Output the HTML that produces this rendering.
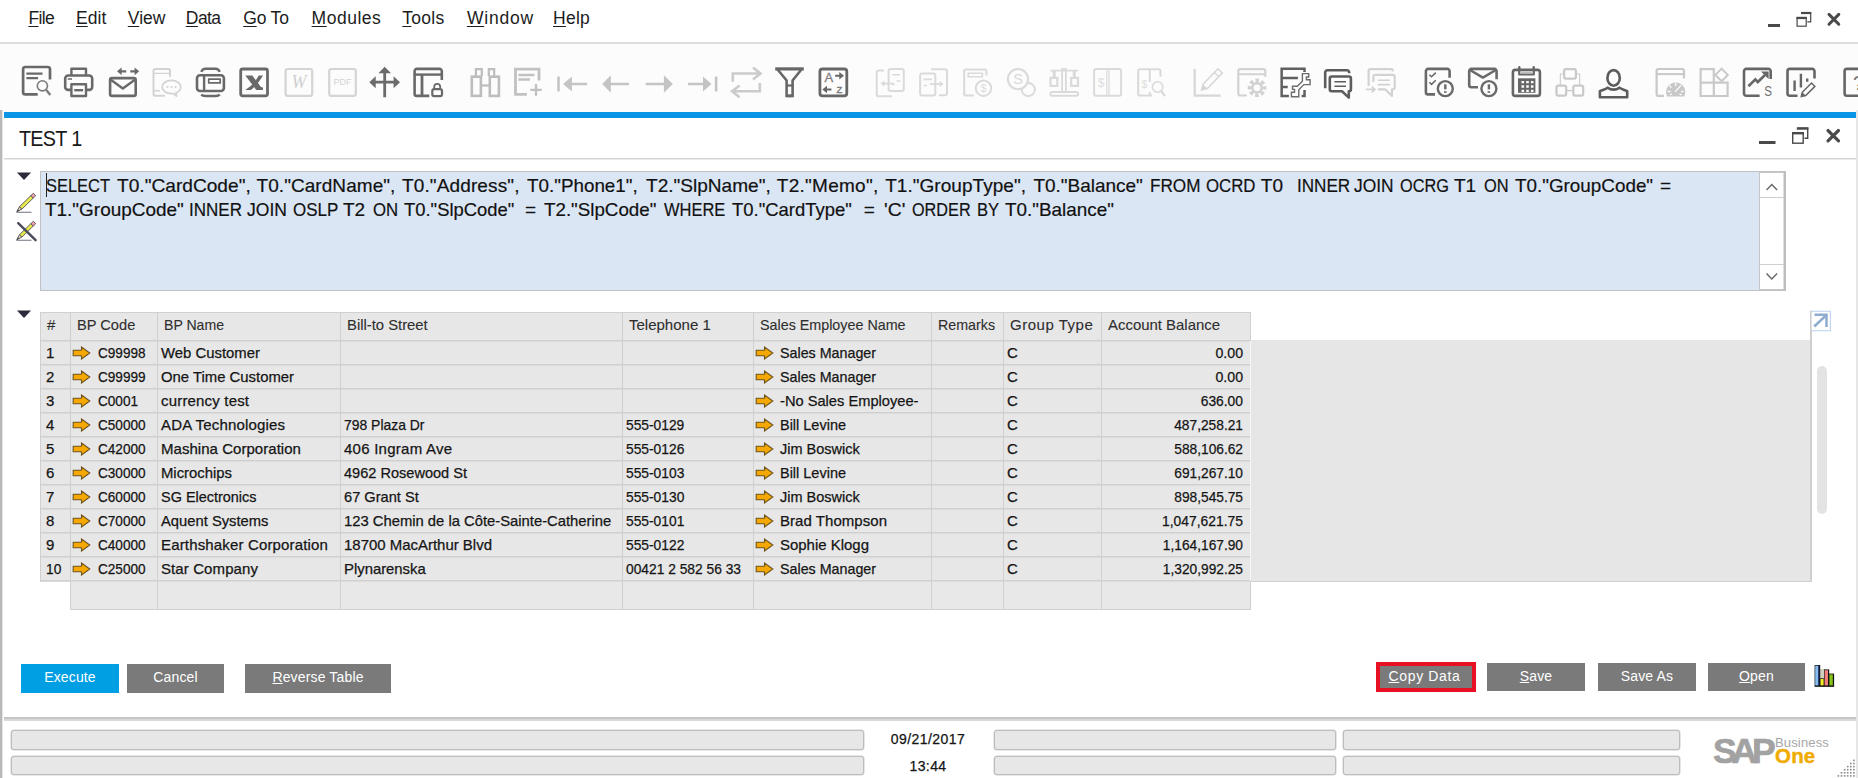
<!DOCTYPE html>
<html lang="en">
<head>
<meta charset="utf-8">
<title>TEST 1</title>
<style>
html,body{margin:0;padding:0;}
body{width:1858px;height:778px;position:relative;overflow:hidden;background:#fff;font-family:"Liberation Sans",sans-serif;color:#1a1a1a;}
.abs{position:absolute;}
/* menu */
#menubar{left:0;top:0;width:1858px;height:43px;background:#fff;}
#menuline{left:0;top:42px;width:1858px;height:2px;background:#dcdcdc;}
.mi{position:absolute;top:7px;font-size:17.5px;line-height:22px;color:#1c1c1c;white-space:nowrap;}
.mi u{text-decoration:underline;text-underline-offset:2px;text-decoration-thickness:1px;}
/* toolbar */
#toolbar{left:0;top:44px;width:1858px;height:68px;background:#fcfcfc;}
.ic{position:absolute;top:66px;width:30px;height:30px;}
#bluebar{left:4px;top:112px;width:1852px;height:6px;background:#0a94e6;}
#lborder{left:0;top:110px;width:2px;height:668px;background:#b9b9b9;border-right:1px solid #e3e3e3;}
#rborder{left:1856px;top:110px;width:2px;height:668px;background:#e6e6e6;}
#title{left:19px;top:127px;font-size:22px;line-height:24px;color:#1a1a1a;white-space:nowrap;transform:scaleX(0.9);transform-origin:0 0;letter-spacing:-0.8px;}
#titleline{left:4px;top:158px;width:1852px;height:2px;background:linear-gradient(#d5d5d5 50%,#ebebeb 50%);}
/* query box */
#qbox{left:40px;top:171px;width:1744px;height:118px;border:1px solid #c1c1c1;background:#dbe6f4;}
#qtext{left:46px;top:173px;font-size:19px;line-height:24px;color:#111;white-space:pre;-webkit-text-stroke:0.2px #111;}
#qscroll{left:1760px;top:173px;width:24px;height:116px;background:#fff;border-left:1px solid #c4c4c4;}
.qw{position:absolute;white-space:pre;transform-origin:0 0;}
/* grid */
#grid{left:40px;top:312px;}
.cell{position:absolute;font-size:15px;line-height:16px;transform-origin:0 0;color:#151515;white-space:nowrap;-webkit-text-stroke:0.25px #151515;}
.cell.hd{color:#2e2e2e;-webkit-text-stroke:0.1px #2e2e2e;}
.gl{position:absolute;background:#d0d0d0;}
.arw{position:absolute;width:19px;height:14px;}
.gl2{position:absolute;background:#dcdcdc;}
.arw path{fill:#f6a800;stroke:#6e5420;stroke-width:1.1;stroke-linejoin:miter;}
/* buttons */
.btn{position:absolute;top:663px;height:28px;background:#7a7a7a;color:#fff;font-size:14px;line-height:26px;text-align:center;white-space:nowrap;letter-spacing:0.15px;}
.btn u{text-underline-offset:1px;}
/* status */
#statline{left:4px;top:717px;width:1852px;height:4px;background:linear-gradient(#c3c3c3,#c8c8c8 50%,#d6d6d6 50%,#dadada);}
.sf{position:absolute;height:17px;background:#e7e7e7;border:1px solid #bdbdbd;border-radius:3px;box-shadow:0 0 0 0.5px #d0d0d0;}
.st{position:absolute;font-size:14px;line-height:16px;color:#151515;text-align:center;width:100px;letter-spacing:0.42px;-webkit-text-stroke:0.25px #151515;}
</style>
</head>
<body>
<div id="menubar" class="abs"></div>
<div id="menuline" class="abs"></div>
<div class="mi" style="left:28.4px;letter-spacing:-0.60px"><u>F</u>ile</div>
<div class="mi" style="left:76.0px;letter-spacing:0.03px"><u>E</u>dit</div>
<div class="mi" style="left:127.8px;letter-spacing:0.03px"><u>V</u>iew</div>
<div class="mi" style="left:185.8px;letter-spacing:-0.57px"><u>D</u>ata</div>
<div class="mi" style="left:243.2px;letter-spacing:-0.17px"><u>G</u>o To</div>
<div class="mi" style="left:311.6px;letter-spacing:0.51px"><u>M</u>odules</div>
<div class="mi" style="left:402.3px;letter-spacing:0.28px"><u>T</u>ools</div>
<div class="mi" style="left:466.9px;letter-spacing:0.81px"><u>W</u>indow</div>
<div class="mi" style="left:553px;letter-spacing:0.26px"><u>H</u>elp</div>

<div id="toolbar" class="abs"></div>
<!--ICONS-->
<svg class="abs" style="left:0;top:44px" width="1858" height="68" viewBox="0 44 1858 68" fill="none" stroke-linejoin="round">
<!-- 1 print preview -->
<g stroke="#696969">
<path d="M50 79.5V69.2a2.2 2.2 0 0 0-2.2-2.2H25.3a2.2 2.2 0 0 0-2.2 2.2v23a2.2 2.2 0 0 0 2.2 2.2H37.7" stroke-width="2.7"/>
<path d="M26.4 73.7H42.5M26.4 78.1H38" stroke-width="2.2"/>
<circle cx="42.4" cy="85.8" r="5.1" stroke-width="1.6" stroke="#7c7c7c"/>
<path d="M46.3 90L50.3 95" stroke-width="2.4" stroke="#7c7c7c"/>
</g>
<!-- 2 printer -->
<g stroke="#696969">
<path d="M71.4 75V68.8H86V75" stroke-width="2.4"/>
<rect x="65.2" y="75.5" width="27" height="14.4" rx="3" stroke-width="2.6"/>
<rect x="71.4" y="84.2" width="14.6" height="11.8" fill="#fcfcfc" stroke-width="2.4"/>
<path d="M67.8 79H72" stroke-width="1.5"/>
<path d="M74.2 90.2H83.1" stroke-width="2.4"/>
</g>
<!-- 3 envelope with arrows -->
<g stroke="#696969">
<rect x="110.1" y="78.1" width="25.6" height="17.8" rx="2" stroke-width="2.6"/>
<path d="M110.8 79.8L122.8 88.4L134.9 79.8" stroke-width="2.4"/>
<path d="M120 71.300H126.200M130.300 71.300H136.500" stroke-width="2.200"/>
<path d="M117 71.300L121.600 67.400V75.200ZM139.200 71.300L134.600 67.400V75.200Z" fill="#696969" stroke="none"/>
</g>
<!-- 4 phone chat (disabled) -->
<g stroke="#d3d3d3">
<path d="M170 76.8V70.8a1.8 1.8 0 0 0-1.8-1.8H155.3a1.8 1.8 0 0 0-1.8 1.8V93.9a1.8 1.8 0 0 0 1.8 1.8H164.7" stroke-width="2"/>
<path d="M153.5 73.4H170M153.5 90.7H160" stroke-width="1.4"/>
<path d="M171.5 80.4c5.2 0 9.3 2.9 9.3 6.6c0 2.6-2 4.8-4.9 5.9l0.6 3.3l-3.4-2.7c-0.5 0.1-1 0.1-1.6 0.1c-5.2 0-9.3-2.9-9.3-6.6s4.100-6.600 9.300-6.600Z" stroke-width="1.7" fill="#fcfcfc"/>
<path d="M167.500 87h0.010M171.500 87h0.010M175.500 87h0.010" stroke-width="2.2" stroke-linecap="round"/>
</g>
<!-- 5 fax/layout -->
<g stroke="#696969">
<rect x="197" y="75.3" width="26.9" height="15.7" rx="3" stroke-width="2.6"/>
<path d="M201.3 71.800c0.700-1.900 2-3 4.200-3H215.500c2.200 0 3.500 1.100 4.200 3" stroke-width="2.400"/>
<path d="M201.300 94.500c0.700 1 2 1.500 4.200 1.500H215.500c2.200 0 3.500-0.500 4.200-1.500" stroke-width="2.400"/>
<path d="M204.100 75.300V91" stroke-width="2.400"/>
<rect x="208.700" y="79.100" width="11.500" height="3.800" stroke-width="1.700"/>
</g>
<!-- 6 excel -->
<g stroke="#696969">
<rect x="240.700" y="69" width="26.800" height="26.800" rx="2" stroke-width="2.800"/>
<path d="M245.300 75.600H252.300L263.200 89.900H256.300Z" fill="#696969" stroke="none"/>
<path d="M263 75.600H258.800C256.500 80 251.500 86.500 245.200 89.900H250.800C253.300 88.500 259.500 82 263 75.600Z" fill="#696969" stroke="none"/>
<path d="M257 86.300L263 87.600V89.900H258.500Z" fill="#696969" stroke="none"/>
</g>
<!-- 7 word (disabled) -->
<g stroke="#d4d4d4">
<rect x="285.600" y="69" width="26.600" height="26.800" rx="2" stroke-width="2.200"/>
<text x="298.900" y="88.300" font-family="Liberation Serif,serif" font-style="italic" font-size="18" text-anchor="middle" fill="#cfcfcf" stroke="none">W</text>
</g>
<!-- 8 pdf (disabled) -->
<g stroke="#d4d4d4">
<rect x="329.200" y="69" width="26.600" height="26.800" rx="2" stroke-width="2.200"/>
<text x="342.500" y="85.300" font-family="Liberation Sans,sans-serif" font-size="9" text-anchor="middle" fill="#d2d2d2" stroke="none">PDF</text>
</g>
<!-- 9 move -->
<g stroke="#6b6b6b">
<path d="M384.700 71V97.200M373 82.200H396.500" stroke-width="2.800"/>
<path d="M384.700 66.800L391 73.300H378.400ZM369.300 82.200L375.700 76.200V88.300ZM400 82.200L393.600 76.200V88.300Z" fill="#6b6b6b" stroke="none"/>
</g>
<!-- 10 layout lock -->
<g stroke="#696969">
<path d="M441.800 80V71.100a2.200 2.200 0 0 0-2.200-2.200H416.800a2.200 2.200 0 0 0-2.200 2.200v22.600a2.200 2.200 0 0 0 2.200 2.200H429.300" stroke-width="2.600"/>
<path d="M414.600 74.600H441.800" stroke-width="2.400"/>
<path d="M422 75V95.900" stroke-width="2.800"/>
<rect x="432.300" y="89.100" width="9.700" height="7" rx="1.800" stroke-width="2.200" fill="#fcfcfc"/>
<path d="M434.200 88.500V86.800a3 3 0 0 1 6 0V88.500" stroke-width="1.800"/>
</g>
<!-- 11 binoculars (disabled) -->
<g stroke="#bdbdbd" stroke-linejoin="miter">
<rect x="471.800" y="76.700" width="9.100" height="19.200" stroke-width="2.600"/>
<rect x="489.800" y="76.700" width="9.100" height="19.200" stroke-width="2.600"/>
<path d="M475.900 76V69.200H481.800V76M488.800 76V69.200H494.200V76" stroke-width="2.200"/>
<path d="M481 85.500H489.700" stroke-width="2.200"/>
</g>
<!-- 12 add record (disabled) -->
<g stroke="#c1c1c1" stroke-linejoin="miter">
<path d="M539 80.600V69.050H515.500V94.300H526.900" stroke-width="2.800"/>
<path d="M518.400 75H534.400M518.400 79.500H529.900" stroke-width="2.300"/>
<path d="M536 84.100V95.700M530.200 89.900H541.800" stroke-width="2.400"/>
</g>
<!-- 13-16 nav arrows (disabled) -->
<g stroke="#c4c4c4" fill="#c4c4c4">
<path d="M558.500 76.500V91.400" stroke-width="2.600"/>
<path d="M571 84H587.200M610 84H629M645.700 84H664.500M688 84H704" stroke-width="2.400"/>
<path d="M563.100 84L571.900 76.500V91.400ZM602.200 84L610.800 75.200V92.800ZM672.800 84L663.900 75.200V92.800ZM711.500 84L703 76.500V91.400Z" stroke="none"/>
<path d="M716.100 76.500V91.400" stroke-width="2.600"/>
</g>
<!-- 17 refresh (disabled) -->
<g stroke="#cbcbcb" stroke-linejoin="miter">
<path d="M732.800 81.800V73.500H759M753 67.600L760.500 73.500L753 79.400" stroke-width="2.600"/>
<path d="M759.800 83.100V91.300H733.500M739.600 85.400L732.100 91.300L739.600 97.200" stroke-width="2.600"/>
</g>
<!-- 18 filter -->
<g stroke="#676767" stroke-linejoin="miter">
<path d="M775.200 68.900H803.800" stroke-width="3.200"/>
<path d="M777.600 69.500L786.600 80.500V95.900H792.600V80.500L801.400 69.500" stroke-width="2.600"/>
<path d="M786.600 95.900H792.600" stroke-width="2.600"/>
<path d="M786 85.500H793.500" stroke-width="2.200"/>
</g>
<!-- 19 sort -->
<g stroke="#676767">
<rect x="819.900" y="69" width="26.900" height="26.800" rx="2.500" stroke-width="2.800"/>
<text x="824.400" y="82.400" font-family="Liberation Sans,sans-serif" font-size="13" fill="#7c7c7c" stroke="#7c7c7c" stroke-width="0.300">A</text>
<text x="836.400" y="92.600" font-family="Liberation Sans,sans-serif" font-size="9.500" fill="#7c7c7c" stroke="#7c7c7c" stroke-width="0.400">Z</text>
<path d="M835.200 75.700H840.500M826 89.500H831.400" stroke-width="2"/>
<path d="M844 75.700L839.300 72V79.400ZM822.300 89.500L827 85.800V93.200Z" fill="#676767" stroke="none"/>
</g>
<!-- 20 doc arrow left (very light) -->
<g stroke="#dadada">
<path d="M884 70.600H878.500a1.800 1.800 0 0 0-1.800 1.800V94.400a1.800 1.800 0 0 0 1.800 1.800H892" stroke-width="2"/>
<rect x="888.600" y="69.100" width="15.200" height="21.800" rx="2" stroke-width="2"/>
<path d="M883 83.600H894" stroke-width="1.800"/>
<path d="M880.600 83.600L884.400 80.400V86.800Z" fill="#dadada" stroke="none"/>
<path d="M892.300 74.700H900M896.500 81H900.500M892 84.600H894.500" stroke-width="1.500"/>
</g>
<!-- 21 doc arrow right -->
<g stroke="#dadada">
<rect x="920.100" y="73.500" width="15.200" height="22" rx="2" stroke-width="2"/>
<path d="M931.300 69.300H945.200a1.800 1.800 0 0 1 1.800 1.800V93.400a1.800 1.800 0 0 1-1.800 1.800H939" stroke-width="2"/>
<path d="M930 84H940.500" stroke-width="1.800"/>
<path d="M943.600 84L939.800 80.800V87.200Z" fill="#dadada" stroke="none"/>
<path d="M923.500 79.400H932M924 85.500H927" stroke-width="1.700"/>
</g>
<!-- 22 doc coin -->
<g stroke="#dadada">
<path d="M986.400 75.400V71.300a1.800 1.800 0 0 0-1.800-1.800H966a1.800 1.800 0 0 0-1.800 1.800V93.700a1.800 1.800 0 0 0 1.800 1.800H973.900" stroke-width="2.100"/>
<rect x="968.200" y="73.300" width="14.200" height="3.400" stroke-width="1.600"/>
<circle cx="983.500" cy="88.200" r="7.700" stroke-width="2" fill="#fcfcfc"/>
<text x="983.500" y="92.300" font-family="Liberation Sans,sans-serif" font-size="11" text-anchor="middle" fill="#dcdcdc" stroke="none">$</text>
</g>
<!-- 23 coins -->
<g stroke="#dadada">
<circle cx="1028.300" cy="89.500" r="6.600" stroke-width="2"/>
<circle cx="1018" cy="79.100" r="10.100" stroke-width="2.100" fill="#fcfcfc"/>
<text x="1018" y="84.400" font-family="Liberation Sans,sans-serif" font-size="14.500" text-anchor="middle" fill="#d8d8d8" stroke="none">S</text>
</g>
<!-- 24 scales -->
<g stroke="#dadada" stroke-linejoin="miter">
<rect x="1050.500" y="92" width="27.500" height="3.800" rx="1.500" stroke-width="2"/>
<rect x="1062.100" y="69" width="3.800" height="23" stroke-width="1.800"/>
<path d="M1050.500 70.600H1078" stroke-width="1.800"/>
<path d="M1054.200 70.600V77M1074.300 70.600V77" stroke-width="3"/>
<rect x="1050.500" y="77.900" width="6.800" height="8" stroke-width="2.200"/>
<rect x="1071.200" y="77.900" width="6.800" height="8" stroke-width="2.200"/>
</g>
<!-- 25 columns $ -->
<g stroke="#dadada">
<rect x="1094.100" y="69.100" width="27" height="26.600" rx="2" stroke-width="2"/>
<path d="M1107.900 69.100V95.700" stroke-width="3.400"/>
<path d="M1107.900 70V95" stroke-width="1" stroke="#fcfcfc"/>
<text x="1101" y="87.200" font-family="Liberation Sans,sans-serif" font-size="12" text-anchor="middle" fill="#dcdcdc" stroke="none">$</text>
</g>
<!-- 26 $ search -->
<g stroke="#dadada">
<path d="M1160.500 76.800V71a1.800 1.800 0 0 0-1.800-1.800H1140a1.800 1.800 0 0 0-1.800 1.800V93.700a1.800 1.800 0 0 0 1.800 1.800H1152" stroke-width="2.100"/>
<path d="M1149.800 69.200V82M1149.800 92V95.500" stroke-width="2"/>
<circle cx="1157.600" cy="87" r="5.200" stroke-width="1.600"/>
<path d="M1161.300 91.300L1165 96" stroke-width="2.200"/>
<text x="1144.300" y="87.500" font-family="Liberation Sans,sans-serif" font-size="10.500" text-anchor="middle" fill="#dcdcdc" stroke="none">$</text>
</g>
<!-- 27 edit -->
<g stroke="#d6d6d6" stroke-linejoin="miter">
<path d="M1194.700 69V95.700H1220.700" stroke-width="2.200"/>
<path d="M1203 84.300L1218 68.800L1222.300 73L1207.300 88.500L1201.600 89.900Z" stroke-width="1.500"/>
<path d="M1214.400 72.500L1218.700 76.700" stroke-width="1.300"/>
<path d="M1203 84.300L1207.300 88.500L1201.600 89.900Z" fill="#d6d6d6" stroke="none"/>
</g>
<!-- 28 window gear -->
<g stroke="#d2d2d2">
<path d="M1265.300 76.800V71.100a2 2 0 0 0-2-2H1240.300a2 2 0 0 0-2 2V93.500a2 2 0 0 0 2 2H1246.900" stroke-width="2.200"/>
<path d="M1238.300 74.200H1265.300" stroke-width="2"/>
<circle cx="1257" cy="87.800" r="7.500" stroke-width="3.600" stroke-dasharray="3.500 2.390" stroke-dashoffset="1.750"/>
<circle cx="1257" cy="87.800" r="4.700" stroke-width="2.600" fill="#fcfcfc"/>
</g>
<!-- 29 form settings -->
<g stroke="#606060" stroke-linejoin="miter">
<path d="M1304.500 71.900V68.650H1281.650V96.050H1288.900" stroke-width="2.500"/>
<path d="M1281.600 77.950H1297.900M1281.600 87H1287.700" stroke-width="2.500"/>
<path d="M1304.550 90V96.050H1301.600" stroke-width="2.500"/>
<path d="M1302.400 73.600H1308.700V77H1306.400V79.800H1310.100V84.600H1303.800L1298.800 89.700V96.800H1291.400V92.200H1294.500V89.400H1292.500V86.300H1297.300L1302.400 81.200Z" stroke-width="1.400" fill="#fcfcfc" stroke="#6c6c6c"/>
</g>
<!-- 30 chat -->
<g stroke="#5c5c5c">
<path d="M1349.200 73.300V72.500a2.200 2.200 0 0 0-2.200-2.200H1327.400a2.200 2.200 0 0 0-2.200 2.200V88.300" stroke-width="2.600"/>
<path d="M1331.800 76.500H1348.900a2 2 0 0 1 2 2V89.200a2 2 0 0 1-2 2H1348.800V97.600L1342 91.200H1331.800a2 2 0 0 1-2-2V78.500a2 2 0 0 1 2-2Z" stroke-width="2.600" fill="#fcfcfc"/>
<path d="M1334.400 81.800H1346M1334.400 86.300H1346" stroke-width="1.500"/>
</g>
<!-- 31 chat arrow (disabled) -->
<g stroke="#d2d2d2">
<path d="M1392.800 71.500V70.900a1.800 1.800 0 0 0-1.800-1.800H1370.400a1.800 1.800 0 0 0-1.800 1.800V86" stroke-width="2.100"/>
<path d="M1375.200 74.900H1392.900a1.800 1.800 0 0 1 1.800 1.800V87.600a1.800 1.800 0 0 1-1.800 1.800H1392V96L1385.500 89.400H1378" stroke-width="2.100"/>
<path d="M1373.400 82V76.700a1.800 1.800 0 0 1 1.800-1.800" stroke-width="2.100"/>
<path d="M1377.800 80.200H1389.900M1377.800 84.600H1389.900" stroke-width="1.600"/>
<path d="M1365.700 89.400H1372" stroke-width="1.600"/>
<path d="M1376.300 89.400L1371.800 85.600V93.200Z" fill="#d2d2d2" stroke="none"/>
</g>
<!-- 32 checklist alert -->
<g stroke="#696969">
<path d="M1449.600 77.800V71.100a2.200 2.200 0 0 0-2.200-2.200H1428.100a2.200 2.200 0 0 0-2.200 2.200V92.200a2.200 2.200 0 0 0 2.200 2.200H1435" stroke-width="2.600"/>
<path d="M1429.400 74.700L1431.500 76.800L1435.800 72.600M1429.400 82.300L1431.500 84.400L1435.800 80.200" stroke-width="1.500" stroke-linejoin="miter"/>
<circle cx="1445.300" cy="88.600" r="7.500" stroke-width="2.400" fill="#fcfcfc"/>
<path d="M1445.300 84.300V89.400" stroke-width="2.400"/>
<path d="M1444 92H1446.600" stroke-width="1.600"/>
</g>
<!-- 33 mail alert -->
<g stroke="#696969">
<path d="M1496.600 79.300V71.100a2.200 2.200 0 0 0-2.200-2.200H1471.400a2.200 2.200 0 0 0-2.200 2.200V85a2.200 2.200 0 0 0 2.200 2.200H1478" stroke-width="2.600"/>
<path d="M1470 70L1482.900 77.600L1495.800 70" stroke-width="2.400"/>
<circle cx="1488.900" cy="88.600" r="7.500" stroke-width="2.400" fill="#fcfcfc"/>
<path d="M1488.900 84.300V89.400" stroke-width="2.400"/>
<path d="M1487.600 92H1490.200" stroke-width="1.600"/>
</g>
<!-- 34 calendar -->
<g stroke="#666">
<rect x="1512.900" y="69.900" width="27" height="26" rx="2.500" stroke-width="2.600"/>
<path d="M1519.300 67.200V70M1533.700 67.200V70" stroke-width="2.400" stroke-linecap="round"/>
<path d="M1519.200 70V74.500H1533.800V70" stroke-width="2.200"/>
<path d="M1521 72.300H1532" stroke-width="0.800" stroke="#999"/>
<rect x="1518" y="78.300" width="17.400" height="14.500" fill="#666" stroke="none"/>
<path d="M1521.500 80.900h2.600v2.400h-2.600zM1526.200 80.900h2.600v2.400h-2.600zM1530.900 80.900h2.600v2.400h-2.600zM1521.500 85.300h2.600v2.400h-2.600zM1526.200 85.300h2.600v2.400h-2.600zM1530.900 85.300h2.600v2.400h-2.600zM1521.500 89.700h2.600v2.400h-2.600zM1526.200 89.700h2.600v2.400h-2.600zM1530.900 89.700h2.600v2.400h-2.600z" fill="#fcfcfc" stroke="none"/>
</g>
<!-- 35 org chart (disabled) -->
<g stroke="#c9c9c9">
<rect x="1564.100" y="69.100" width="11.800" height="9.500" rx="1.800" stroke-width="2.200"/>
<rect x="1556.500" y="85.700" width="9.700" height="9.900" rx="1.800" stroke-width="2.200"/>
<rect x="1573.300" y="85.700" width="9.900" height="9.900" rx="1.800" stroke-width="2.200"/>
<path d="M1564 74H1560.300V85M1576 74H1579.700V85M1566.500 90.600H1573" stroke-width="1.100"/>
</g>
<!-- 36 user -->
<g stroke="#5c5c5c">
<ellipse cx="1613.600" cy="77.900" rx="6.200" ry="7.800" stroke-width="2.600"/>
<path d="M1607.800 87.700C1606.500 89 1603 89.700 1599.900 91.200V97.200H1627.200V91.200C1624 89.700 1620.700 89 1619.400 87.700C1616 90.300 1611 90.300 1607.800 87.700Z" stroke-width="2.600"/>
</g>
<!-- 37 window gauge (disabled) -->
<g stroke="#c8c8c8">
<path d="M1684 78.400V71a2 2 0 0 0-2-2H1658.600a2 2 0 0 0-2 2V93.900a2 2 0 0 0 2 2H1663.900" stroke-width="2.200"/>
<path d="M1656.600 74.100H1684" stroke-width="2"/>
<path d="M1667.200 96.500A9.600 9.600 0 1 1 1684.200 96.500Z" fill="#c8c8c8" stroke="none"/>
<path d="M1675.700 83V86M1669.500 85.500L1671.400 87.700M1667.700 91.500H1670.500M1683.700 91.500H1680.900M1670 95L1672 93.700M1681.600 95.300L1679.500 93.800M1675.200 91.800L1681 85.400" stroke="#fcfcfc" stroke-width="1.300"/>
</g>
<!-- 38 widgets (disabled) -->
<g stroke="#c9c9c9" stroke-linejoin="miter">
<path d="M1700.600 69.100H1713.800V96H1700.600ZM1700.600 82.600H1727.600V96H1713.800" stroke-width="2.200"/>
<path d="M1721.600 68.600L1727.800 74.900L1721.600 81.200L1715.400 74.900Z" stroke-width="2"/>
</g>
<!-- 39 chart S -->
<g stroke="#666">
<path d="M1770.700 79V71.100a2.200 2.200 0 0 0-2.200-2.200H1746.200a2.200 2.200 0 0 0-2.200 2.200V93.500a2.200 2.200 0 0 0 2.200 2.200H1759.600" stroke-width="2.600"/>
<path d="M1748.400 86.200L1755.400 79.300L1757.800 82L1765 75" stroke-width="2.600" stroke-linejoin="miter"/>
<path d="M1761 71.400H1768.600V79Z" fill="#666" stroke="none"/>
<text x="0" y="0" transform="translate(1768 95.600) scale(0.800 1)" font-family="Liberation Sans,sans-serif" font-size="14.500" text-anchor="middle" fill="#707070" stroke="none">S</text>
</g>
<!-- 40 chart edit -->
<g stroke="#666">
<path d="M1814.500 78.400V71.100a2.200 2.200 0 0 0-2.200-2.200H1789.700a2.200 2.200 0 0 0-2.200 2.200V93.500a2.200 2.200 0 0 0 2.200 2.200H1797.500" stroke-width="2.600"/>
<path d="M1794.600 80.600V91M1800.900 73.800V87.500M1807.200 78.400V81.800" stroke-width="2.400"/>
<path d="M1802.300 92.200L1811.500 83L1814.900 86.400L1805.700 95.600L1801.300 96.600Z" stroke-width="1.500" stroke-linejoin="miter" fill="#fcfcfc"/>
<path d="M1802.300 92.200L1805.700 95.600L1801.300 96.600Z" fill="#666" stroke="none"/>
</g>
<!-- 41 help -->
<g stroke="#666">
<rect x="1844.600" y="68.900" width="27" height="26.800" rx="2.200" stroke-width="2.600"/>
<text x="1858.500" y="90" font-family="Liberation Sans,sans-serif" font-size="20" text-anchor="middle" fill="#777" stroke="none">?</text>
</g>
</svg>
<!--/ICONS-->
<div id="bluebar" class="abs"></div>
<div id="lborder" class="abs"></div>
<div id="rborder" class="abs"></div>
<div id="title" class="abs">TEST 1</div>
<div id="titleline" class="abs"></div>

<div id="qbox" class="abs"></div>
<div id="qtext" class="abs" style="left:0;top:0"><span class="qw" style="left:46.3px;top:173.5px;transform:scaleX(0.865)">SELECT</span> <span class="qw" style="left:117.4px;top:173.5px;transform:scaleX(1.007)">T0.&quot;CardCode&quot;,</span> <span class="qw" style="left:256.5px;top:173.5px;letter-spacing:0.06px">T0.&quot;CardName&quot;,</span> <span class="qw" style="left:402.0px;top:173.5px;letter-spacing:0.13px">T0.&quot;Address&quot;,</span> <span class="qw" style="left:526.8px;top:173.5px;transform:scaleX(0.991)">T0.&quot;Phone1&quot;,</span> <span class="qw" style="left:646.3px;top:173.5px;transform:scaleX(1.003)">T2.&quot;SlpName&quot;,</span> <span class="qw" style="left:776.8px;top:173.5px;letter-spacing:0.27px">T2.&quot;Memo&quot;,</span> <span class="qw" style="left:885.2px;top:173.5px;letter-spacing:0.04px">T1.&quot;GroupType&quot;,</span> <span class="qw" style="left:1033.4px;top:173.5px;letter-spacing:-0.02px">T0.&quot;Balance&quot;</span> <span class="qw" style="left:1150.0px;top:173.5px;transform:scaleX(0.903)">FROM</span> <span class="qw" style="left:1206.0px;top:173.5px;transform:scaleX(0.885)">OCRD</span> <span class="qw" style="left:1260.8px;top:173.5px;letter-spacing:0.13px">T0</span> <span class="qw" style="left:1296.5px;top:173.5px;transform:scaleX(0.900)">INNER</span> <span class="qw" style="left:1354.2px;top:173.5px;transform:scaleX(0.915)">JOIN</span> <span class="qw" style="left:1399.9px;top:173.5px;transform:scaleX(0.858)">OCRG</span> <span class="qw" style="left:1454.3px;top:173.5px;transform:scaleX(1.001)">T1</span> <span class="qw" style="left:1484.3px;top:173.5px;transform:scaleX(0.863)">ON</span> <span class="qw" style="left:1515.4px;top:173.5px;transform:scaleX(0.992)">T0.&quot;GroupCode&quot;</span> <span class="qw" style="left:1660.0px;top:173.5px;letter-spacing:0.00px">=</span> <span class="qw" style="left:45.0px;top:197.5px;transform:scaleX(0.997)">T1.&quot;GroupCode&quot;</span> <span class="qw" style="left:189.2px;top:197.5px;transform:scaleX(0.895)">INNER</span> <span class="qw" style="left:246.5px;top:197.5px;transform:scaleX(0.922)">JOIN</span> <span class="qw" style="left:292.6px;top:197.5px;transform:scaleX(0.892)">OSLP</span> <span class="qw" style="left:343.3px;top:197.5px;transform:scaleX(1.001)">T2</span> <span class="qw" style="left:372.7px;top:197.5px;transform:scaleX(0.884)">ON</span> <span class="qw" style="left:403.7px;top:197.5px;transform:scaleX(0.969)">T0.&quot;SlpCode&quot;</span> <span class="qw" style="left:525.0px;top:197.5px;letter-spacing:0.00px">=</span> <span class="qw" style="left:543.5px;top:197.5px;transform:scaleX(0.987)">T2.&quot;SlpCode&quot;</span> <span class="qw" style="left:664.0px;top:197.5px;transform:scaleX(0.867)">WHERE</span> <span class="qw" style="left:732.4px;top:197.5px;transform:scaleX(0.971)">T0.&quot;CardType&quot;</span> <span class="qw" style="left:863.7px;top:197.5px;letter-spacing:0.00px">=</span> <span class="qw" style="left:884.2px;top:197.5px;transform:scaleX(1.016)">'C'</span> <span class="qw" style="left:911.9px;top:197.5px;transform:scaleX(0.854)">ORDER</span> <span class="qw" style="left:976.7px;top:197.5px;transform:scaleX(0.876)">BY</span> <span class="qw" style="left:1005.0px;top:197.5px;transform:scaleX(0.994)">T0.&quot;Balance&quot;</span></div>


<!--WINCTL-->
<svg class="abs" style="left:1750px;top:0" width="108" height="42" viewBox="1750 0 108 42" fill="none" stroke="#4a4a4a">
<rect x="1768" y="24" width="12" height="3" fill="#4a4a4a" stroke="none"/>
<path d="M1801.600 13.100H1810.700V21.800H1807.300" stroke-width="1.200"/>
<path d="M1801 13H1811.300" stroke-width="2.200"/>
<rect x="1797.100" y="17.500" width="9.100" height="8.700" stroke-width="1.200"/>
<path d="M1796.500 18H1806.800" stroke-width="2.200"/>
<path d="M1829 14.400L1838.800 24.300M1838.800 14.400L1829 24.300" stroke-width="3" stroke-linecap="round"/>
</svg>
<svg class="abs" style="left:1750px;top:120px" width="108" height="36" viewBox="1750 120 108 36" fill="none" stroke="#4a4a4a">
<rect x="1759" y="141" width="16.500" height="3" fill="#4a4a4a" stroke="none"/>
<path d="M1797.500 128.300H1807.700V138.300H1804.500" stroke-width="1.400"/>
<path d="M1796.800 128.500H1808.400" stroke-width="2.400"/>
<rect x="1792.700" y="132.700" width="10.500" height="10.500" stroke-width="1.400"/>
<path d="M1792 133.200H1803.900" stroke-width="2.400"/>
<path d="M1828 130.500L1838.500 140.800M1838.500 130.500L1828 140.800" stroke-width="3.200" stroke-linecap="round"/>
</svg>
<!--LEFTICONS-->
<svg class="abs" style="left:10px;top:168px" width="30" height="160" viewBox="10 168 30 160" fill="none">
<path d="M17 172.500H31L24 180Z" fill="#2b2b3b"/>
<path d="M17 310.500H31L24 318Z" fill="#2b2b3b"/>
<g>
<path d="M16.300 212.300H31.500" stroke="#8a8a92" stroke-width="1.200"/>
<path d="M19.400 206.800L30.870 195.640L33.240 198.080L21.800 209.200Z" fill="#e6e84a" stroke="#50505a" stroke-width="0.900" stroke-linejoin="round"/>
<path d="M30.870 195.640L33.300 193.280L35.680 195.720L33.240 198.080Z" fill="#f5a0aa" stroke="#50505a" stroke-width="0.900" stroke-linejoin="round"/>
<path d="M16.800 211.700L19.400 206.800L21.800 209.200Z" fill="#e8d8b8" stroke="#50505a" stroke-width="0.900" stroke-linejoin="round"/>
<path d="M16.800 211.700L18 209.400L19.100 210.600Z" fill="#333"/>
</g>
<g transform="translate(0 28)">
<path d="M16.300 212.300H31.500" stroke="#8a8a92" stroke-width="1.200"/>
<path d="M19.400 206.800L30.870 195.640L33.240 198.080L21.800 209.200Z" fill="#e6e84a" stroke="#50505a" stroke-width="0.900" stroke-linejoin="round"/>
<path d="M30.870 195.640L33.300 193.280L35.680 195.720L33.240 198.080Z" fill="#f5a0aa" stroke="#50505a" stroke-width="0.900" stroke-linejoin="round"/>
<path d="M16.800 211.700L19.400 206.800L21.800 209.200Z" fill="#e8d8b8" stroke="#50505a" stroke-width="0.900" stroke-linejoin="round"/>
<path d="M16.800 211.700L18 209.400L19.100 210.600Z" fill="#333"/>
<path d="M18.200 195.200L35.600 212.200" stroke="#4a4a5a" stroke-width="2.400" stroke-linecap="round"/>
</g>
</svg>
<!--QSCROLL-->
<svg class="abs" style="left:1759px;top:172px" width="27" height="118" viewBox="1759 172 27 118" fill="none">
<rect x="1759.500" y="172.500" width="24.500" height="117" fill="#fff" stroke="#c6c6c6" stroke-width="1"/>
<path d="M1759.500 197.500H1784M1759.500 264.500H1784" stroke="#cfcfcf" stroke-width="1"/>
<path d="M1766.500 190L1771.800 184.500L1777.100 190M1766.500 273.500L1771.800 279L1777.100 273.500" stroke="#6a6a6a" stroke-width="1.500"/>
<path d="M1784.700 172V290" stroke="#bdbdbd" stroke-width="1.600"/>
</svg>
<div class="abs" style="left:45.500px;top:172.500px;width:1.500px;height:24px;background:#222"></div>
<!--EXPAND-->
<svg class="abs" style="left:1809px;top:309px" width="24" height="24" viewBox="1809 309 24 24" fill="none">
<rect x="1810.700" y="311.300" width="19.700" height="19.400" fill="#fff" stroke="#c3d8ef" stroke-width="1.200"/>
<path d="M1810.800 310.700V333" stroke="#cdcdcd" stroke-width="1.400"/>
<path d="M1814.200 326.500L1825.800 315.600" stroke="#8eaccf" stroke-width="2.600"/>
<path d="M1814.500 314.750H1826.500V326.900" stroke="#8eaccf" stroke-width="2.500" stroke-linejoin="miter"/>
</svg>
<div class="abs" style="left:1817px;top:366px;width:10px;height:148px;border-radius:5px;background:#e3e3e3"></div>
<!--GRID-->
<div id="gridbg" class="abs" style="left:40px;top:312px;width:1210px;height:270px;background:#e7e7e7"></div>
<div class="abs" style="left:1250px;top:340px;width:560px;height:242px;background:#e6e6e6;border-bottom:1px solid #d0d0d0;box-sizing:border-box"></div>
<div class="abs" style="left:70px;top:582px;width:1180px;height:28px;background:#e8e8e8"></div>
<div class="gl" style="left:40px;top:312px;width:1211px;height:1px"></div>
<div class="gl" style="left:40px;top:340px;width:1211px;height:1px"></div><div class="gl2" style="left:40px;top:341px;width:1211px;height:1px"></div>
<div class="gl" style="left:40px;top:364px;width:1211px;height:1px"></div><div class="gl2" style="left:40px;top:365px;width:1211px;height:1px"></div>
<div class="gl" style="left:40px;top:388px;width:1211px;height:1px"></div><div class="gl2" style="left:40px;top:389px;width:1211px;height:1px"></div>
<div class="gl" style="left:40px;top:412px;width:1211px;height:1px"></div><div class="gl2" style="left:40px;top:413px;width:1211px;height:1px"></div>
<div class="gl" style="left:40px;top:436px;width:1211px;height:1px"></div><div class="gl2" style="left:40px;top:437px;width:1211px;height:1px"></div>
<div class="gl" style="left:40px;top:460px;width:1211px;height:1px"></div><div class="gl2" style="left:40px;top:461px;width:1211px;height:1px"></div>
<div class="gl" style="left:40px;top:484px;width:1211px;height:1px"></div><div class="gl2" style="left:40px;top:485px;width:1211px;height:1px"></div>
<div class="gl" style="left:40px;top:508px;width:1211px;height:1px"></div><div class="gl2" style="left:40px;top:509px;width:1211px;height:1px"></div>
<div class="gl" style="left:40px;top:532px;width:1211px;height:1px"></div><div class="gl2" style="left:40px;top:533px;width:1211px;height:1px"></div>
<div class="gl" style="left:40px;top:556px;width:1211px;height:1px"></div><div class="gl2" style="left:40px;top:557px;width:1211px;height:1px"></div>
<div class="gl" style="left:40px;top:580px;width:1211px;height:1px"></div><div class="gl2" style="left:40px;top:581px;width:1211px;height:1px"></div>
<div class="gl" style="left:70px;top:609px;width:1181px;height:1px"></div>
<div class="gl" style="left:40px;top:312px;width:1px;height:270px"></div>
<div class="gl" style="left:70px;top:312px;width:1px;height:298px"></div>
<div class="gl" style="left:157px;top:312px;width:1px;height:298px"></div>
<div class="gl" style="left:340px;top:312px;width:1px;height:298px"></div>
<div class="gl" style="left:622px;top:312px;width:1px;height:298px"></div>
<div class="gl" style="left:753px;top:312px;width:1px;height:298px"></div>
<div class="gl" style="left:931px;top:312px;width:1px;height:298px"></div>
<div class="gl" style="left:1003px;top:312px;width:1px;height:298px"></div>
<div class="gl" style="left:1101px;top:312px;width:1px;height:298px"></div>
<div class="gl" style="left:1250px;top:312px;width:1px;height:298px"></div>
<div class="abs" style="left:1250px;top:341px;width:1px;height:240px;background:#f6f6f6"></div>
<div class="abs" style="left:1810px;top:331px;width:1.500px;height:251px;background:#cfcfcf"></div>
<div class="cell hd" style="left:47px;top:317px">#</div>
<div class="cell hd" style="left:77px;top:317px;transform:scaleX(0.975)">BP Code</div>
<div class="cell hd" style="left:164px;top:317px;transform:scaleX(0.939)">BP Name</div>
<div class="cell hd" style="left:347px;top:317px;transform:scaleX(0.988)">Bill-to Street</div>
<div class="cell hd" style="left:629px;top:317px">Telephone 1</div>
<div class="cell hd" style="left:760px;top:317px;transform:scaleX(0.954)">Sales Employee Name</div>
<div class="cell hd" style="left:938px;top:317px;transform:scaleX(0.950)">Remarks</div>
<div class="cell hd" style="left:1010px;top:317px;letter-spacing:0.52px">Group Type</div>
<div class="cell hd" style="left:1108px;top:317px;transform:scaleX(0.995)">Account Balance</div>
<div class="cell" style="left:46px;top:345px">1</div>
<svg class="arw" viewBox="0 0 19 14" style="left:72px;top:346px"><path d="M1.200 4.300h8.300v-3.300l8.300 6-8.300 6v-3.300h-8.300z"/></svg>
<div class="cell" style="left:98px;top:345px;transform:scaleX(0.904)">C99998</div>
<div class="cell" style="left:161px;top:345px;transform:scaleX(0.992)">Web Customer</div>
<svg class="arw" viewBox="0 0 19 14" style="left:755px;top:346px"><path d="M1.200 4.300h8.300v-3.300l8.300 6-8.300 6v-3.300h-8.300z"/></svg>
<div class="cell" style="left:780px;top:345px;transform:scaleX(0.952)">Sales Manager</div>
<div class="cell" style="left:1007px;top:345px">C</div>
<div class="cell" style="left:1103px;top:345px;width:140px;text-align:right;transform-origin:100% 0;transform:scaleX(0.942)">0.00</div>
<div class="cell" style="left:46px;top:369px">2</div>
<svg class="arw" viewBox="0 0 19 14" style="left:72px;top:370px"><path d="M1.200 4.300h8.300v-3.300l8.300 6-8.300 6v-3.300h-8.300z"/></svg>
<div class="cell" style="left:98px;top:369px;transform:scaleX(0.905)">C99999</div>
<div class="cell" style="left:161px;top:369px;transform:scaleX(0.991)">One Time Customer</div>
<svg class="arw" viewBox="0 0 19 14" style="left:755px;top:370px"><path d="M1.200 4.300h8.300v-3.300l8.300 6-8.300 6v-3.300h-8.300z"/></svg>
<div class="cell" style="left:780px;top:369px;transform:scaleX(0.952)">Sales Manager</div>
<div class="cell" style="left:1007px;top:369px">C</div>
<div class="cell" style="left:1103px;top:369px;width:140px;text-align:right;transform-origin:100% 0;transform:scaleX(0.942)">0.00</div>
<div class="cell" style="left:46px;top:393px">3</div>
<svg class="arw" viewBox="0 0 19 14" style="left:72px;top:394px"><path d="M1.200 4.300h8.300v-3.300l8.300 6-8.300 6v-3.300h-8.300z"/></svg>
<div class="cell" style="left:98px;top:393px;transform:scaleX(0.905)">C0001</div>
<div class="cell" style="left:161px;top:393px;letter-spacing:0.18px">currency test</div>
<svg class="arw" viewBox="0 0 19 14" style="left:755px;top:394px"><path d="M1.200 4.300h8.300v-3.300l8.300 6-8.300 6v-3.300h-8.300z"/></svg>
<div class="cell" style="left:780px;top:393px;transform:scaleX(0.977)">-No Sales Employee-</div>
<div class="cell" style="left:1007px;top:393px">C</div>
<div class="cell" style="left:1103px;top:393px;width:140px;text-align:right;transform-origin:100% 0;transform:scaleX(0.921)">636.00</div>
<div class="cell" style="left:46px;top:417px">4</div>
<svg class="arw" viewBox="0 0 19 14" style="left:72px;top:418px"><path d="M1.200 4.300h8.300v-3.300l8.300 6-8.300 6v-3.300h-8.300z"/></svg>
<div class="cell" style="left:98px;top:417px;transform:scaleX(0.905)">C50000</div>
<div class="cell" style="left:161px;top:417px;letter-spacing:0.17px">ADA Technologies</div>
<div class="cell" style="left:344px;top:417px;transform:scaleX(0.928)">798 Plaza Dr</div>
<div class="cell" style="left:626px;top:417px;transform:scaleX(0.919)">555-0129</div>
<svg class="arw" viewBox="0 0 19 14" style="left:755px;top:418px"><path d="M1.200 4.300h8.300v-3.300l8.300 6-8.300 6v-3.300h-8.300z"/></svg>
<div class="cell" style="left:780px;top:417px;transform:scaleX(0.965)">Bill Levine</div>
<div class="cell" style="left:1007px;top:417px">C</div>
<div class="cell" style="left:1103px;top:417px;width:140px;text-align:right;transform-origin:100% 0;transform:scaleX(0.916)">487,258.21</div>
<div class="cell" style="left:46px;top:441px">5</div>
<svg class="arw" viewBox="0 0 19 14" style="left:72px;top:442px"><path d="M1.200 4.300h8.300v-3.300l8.300 6-8.300 6v-3.300h-8.300z"/></svg>
<div class="cell" style="left:98px;top:441px;transform:scaleX(0.905)">C42000</div>
<div class="cell" style="left:161px;top:441px;letter-spacing:0.04px">Mashina Corporation</div>
<div class="cell" style="left:344px;top:441px;letter-spacing:0.25px">406 Ingram Ave</div>
<div class="cell" style="left:626px;top:441px;transform:scaleX(0.920)">555-0126</div>
<svg class="arw" viewBox="0 0 19 14" style="left:755px;top:442px"><path d="M1.200 4.300h8.300v-3.300l8.300 6-8.300 6v-3.300h-8.300z"/></svg>
<div class="cell" style="left:780px;top:441px;transform:scaleX(0.967)">Jim Boswick</div>
<div class="cell" style="left:1007px;top:441px">C</div>
<div class="cell" style="left:1103px;top:441px;width:140px;text-align:right;transform-origin:100% 0;transform:scaleX(0.915)">588,106.62</div>
<div class="cell" style="left:46px;top:465px">6</div>
<svg class="arw" viewBox="0 0 19 14" style="left:72px;top:466px"><path d="M1.200 4.300h8.300v-3.300l8.300 6-8.300 6v-3.300h-8.300z"/></svg>
<div class="cell" style="left:98px;top:465px;transform:scaleX(0.905)">C30000</div>
<div class="cell" style="left:161px;top:465px;transform:scaleX(0.990)">Microchips</div>
<div class="cell" style="left:344px;top:465px;transform:scaleX(0.970)">4962 Rosewood St</div>
<div class="cell" style="left:626px;top:465px;transform:scaleX(0.920)">555-0103</div>
<svg class="arw" viewBox="0 0 19 14" style="left:755px;top:466px"><path d="M1.200 4.300h8.300v-3.300l8.300 6-8.300 6v-3.300h-8.300z"/></svg>
<div class="cell" style="left:780px;top:465px;transform:scaleX(0.965)">Bill Levine</div>
<div class="cell" style="left:1007px;top:465px">C</div>
<div class="cell" style="left:1103px;top:465px;width:140px;text-align:right;transform-origin:100% 0;transform:scaleX(0.915)">691,267.10</div>
<div class="cell" style="left:46px;top:489px">7</div>
<svg class="arw" viewBox="0 0 19 14" style="left:72px;top:490px"><path d="M1.200 4.300h8.300v-3.300l8.300 6-8.300 6v-3.300h-8.300z"/></svg>
<div class="cell" style="left:98px;top:489px;transform:scaleX(0.905)">C60000</div>
<div class="cell" style="left:161px;top:489px;transform:scaleX(0.963)">SG Electronics</div>
<div class="cell" style="left:344px;top:489px;transform:scaleX(0.975)">67 Grant St</div>
<div class="cell" style="left:626px;top:489px;transform:scaleX(0.920)">555-0130</div>
<svg class="arw" viewBox="0 0 19 14" style="left:755px;top:490px"><path d="M1.200 4.300h8.300v-3.300l8.300 6-8.300 6v-3.300h-8.300z"/></svg>
<div class="cell" style="left:780px;top:489px;transform:scaleX(0.967)">Jim Boswick</div>
<div class="cell" style="left:1007px;top:489px">C</div>
<div class="cell" style="left:1103px;top:489px;width:140px;text-align:right;transform-origin:100% 0;transform:scaleX(0.915)">898,545.75</div>
<div class="cell" style="left:46px;top:513px">8</div>
<svg class="arw" viewBox="0 0 19 14" style="left:72px;top:514px"><path d="M1.200 4.300h8.300v-3.300l8.300 6-8.300 6v-3.300h-8.300z"/></svg>
<div class="cell" style="left:98px;top:513px;transform:scaleX(0.905)">C70000</div>
<div class="cell" style="left:161px;top:513px;transform:scaleX(0.984)">Aquent Systems</div>
<div class="cell" style="left:344px;top:513px;transform:scaleX(0.986)">123 Chemin de la Côte-Sainte-Catherine</div>
<div class="cell" style="left:626px;top:513px;transform:scaleX(0.920)">555-0101</div>
<svg class="arw" viewBox="0 0 19 14" style="left:755px;top:514px"><path d="M1.200 4.300h8.300v-3.300l8.300 6-8.300 6v-3.300h-8.300z"/></svg>
<div class="cell" style="left:780px;top:513px;letter-spacing:0.05px">Brad Thompson</div>
<div class="cell" style="left:1007px;top:513px">C</div>
<div class="cell" style="left:1103px;top:513px;width:140px;text-align:right;transform-origin:100% 0;transform:scaleX(0.925)">1,047,621.75</div>
<div class="cell" style="left:46px;top:537px">9</div>
<svg class="arw" viewBox="0 0 19 14" style="left:72px;top:538px"><path d="M1.200 4.300h8.300v-3.300l8.300 6-8.300 6v-3.300h-8.300z"/></svg>
<div class="cell" style="left:98px;top:537px;transform:scaleX(0.905)">C40000</div>
<div class="cell" style="left:161px;top:537px;letter-spacing:0.16px">Earthshaker Corporation</div>
<div class="cell" style="left:344px;top:537px;transform:scaleX(0.997)">18700 MacArthur Blvd</div>
<div class="cell" style="left:626px;top:537px;transform:scaleX(0.920)">555-0122</div>
<svg class="arw" viewBox="0 0 19 14" style="left:755px;top:538px"><path d="M1.200 4.300h8.300v-3.300l8.300 6-8.300 6v-3.300h-8.300z"/></svg>
<div class="cell" style="left:780px;top:537px;transform:scaleX(0.997)">Sophie Klogg</div>
<div class="cell" style="left:1007px;top:537px">C</div>
<div class="cell" style="left:1103px;top:537px;width:140px;text-align:right;transform-origin:100% 0;transform:scaleX(0.915)">1,164,167.90</div>
<div class="cell" style="left:46px;top:561px;transform:scaleX(0.920)">10</div>
<svg class="arw" viewBox="0 0 19 14" style="left:72px;top:562px"><path d="M1.200 4.300h8.300v-3.300l8.300 6-8.300 6v-3.300h-8.300z"/></svg>
<div class="cell" style="left:98px;top:561px;transform:scaleX(0.905)">C25000</div>
<div class="cell" style="left:161px;top:561px;letter-spacing:0.10px">Star Company</div>
<div class="cell" style="left:344px;top:561px;transform:scaleX(0.990)">Plynarenska</div>
<div class="cell" style="left:626px;top:561px;transform:scaleX(0.919)">00421 2 582 56 33</div>
<svg class="arw" viewBox="0 0 19 14" style="left:755px;top:562px"><path d="M1.200 4.300h8.300v-3.300l8.300 6-8.300 6v-3.300h-8.300z"/></svg>
<div class="cell" style="left:780px;top:561px;transform:scaleX(0.952)">Sales Manager</div>
<div class="cell" style="left:1007px;top:561px">C</div>
<div class="cell" style="left:1103px;top:561px;width:140px;text-align:right;transform-origin:100% 0;transform:scaleX(0.915)">1,320,992.25</div>
<!--BUTTONS-->
<div class="btn" style="left:21px;top:664px;width:98px;height:29px;line-height:27px;background:#009ee3">Execute</div>
<div class="btn" style="left:127px;top:664px;width:97px;height:29px;line-height:27px">Cancel</div>
<div class="btn" style="left:245px;top:664px;width:146px;height:29px;line-height:27px"><u>R</u>everse Table</div>
<div class="btn" style="left:1487px;width:98px"><u>S</u>ave</div>
<div class="btn" style="left:1598px;width:98px">Save As</div>
<div class="btn" style="left:1708px;width:97px"><u>O</u>pen</div>
<div class="abs" style="left:1376px;top:662px;width:100px;height:30px;background:#e81123"></div>
<div class="btn" style="left:1380px;top:666px;width:92px;height:22px;line-height:20px;text-indent:-3px;letter-spacing:0.650px"><u>C</u>opy Data</div>
<svg class="abs" style="left:1812px;top:662px" width="26" height="28" viewBox="1812 662 26 28" fill="none">
<rect x="1820" y="669" width="5" height="10" fill="#cfcfc0"/>
<rect x="1814.600" y="665" width="5.600" height="21.200" fill="#111"/>
<rect x="1815.200" y="665.700" width="3.400" height="20" fill="#86bdf0"/>
<rect x="1818" y="666" width="1.200" height="19.700" fill="#2a3f7a"/>
<rect x="1820.200" y="678.300" width="4.200" height="8" fill="#111"/>
<rect x="1820.600" y="679" width="3" height="6.600" fill="#f6ee22"/>
<rect x="1824" y="669.400" width="5.200" height="16.900" fill="#111"/>
<rect x="1824.600" y="670.200" width="3.400" height="15.500" fill="#f27c7c"/>
<rect x="1828.900" y="673.600" width="5.200" height="12.700" fill="#111"/>
<rect x="1829.400" y="674.400" width="3.400" height="11.300" fill="#86c21a"/>
<rect x="1814.600" y="685.600" width="19.500" height="1.200" fill="#111"/>
</svg>
<!--SAPLOGO-->
<div class="abs" style="left:1713px;top:734px;font-size:35.500px;line-height:34px;font-weight:bold;color:#a2a2a2;letter-spacing:-5.100px;white-space:nowrap;-webkit-text-stroke:0.700px #a2a2a2">SAP</div>
<div class="abs" style="left:1775px;top:736px;font-size:13px;line-height:14px;color:#a6a6a6;white-space:nowrap;letter-spacing:0.150px">Business</div>
<div class="abs" style="left:1775px;top:745.500px;font-size:20.500px;line-height:20px;font-weight:bold;color:#f0ab00;white-space:nowrap;letter-spacing:0.200px;-webkit-text-stroke:0.400px #f0ab00">One</div>
<svg class="abs" style="left:1835.200px;top:757.400px" width="22" height="20" viewBox="1836 758 22 20">
<g fill="#8a8a8a">
<rect x="1854.1" y="760.6" width="1.6" height="1.6"/><rect x="1851.0" y="763.7" width="1.6" height="1.6"/><rect x="1854.1" y="763.7" width="1.6" height="1.6"/><rect x="1847.9" y="766.8" width="1.6" height="1.6"/><rect x="1851.0" y="766.8" width="1.6" height="1.6"/><rect x="1854.1" y="766.8" width="1.6" height="1.6"/><rect x="1844.8" y="769.9" width="1.6" height="1.6"/><rect x="1847.9" y="769.9" width="1.6" height="1.6"/><rect x="1851.0" y="769.9" width="1.6" height="1.6"/><rect x="1854.1" y="769.9" width="1.6" height="1.6"/><rect x="1841.7" y="773.0" width="1.6" height="1.6"/><rect x="1844.8" y="773.0" width="1.6" height="1.6"/><rect x="1847.9" y="773.0" width="1.6" height="1.6"/><rect x="1851.0" y="773.0" width="1.6" height="1.6"/><rect x="1854.1" y="773.0" width="1.6" height="1.6"/><rect x="1838.6" y="776.1" width="1.6" height="1.6"/><rect x="1841.7" y="776.1" width="1.6" height="1.6"/><rect x="1844.8" y="776.1" width="1.6" height="1.6"/><rect x="1847.9" y="776.1" width="1.6" height="1.6"/><rect x="1851.0" y="776.1" width="1.6" height="1.6"/><rect x="1854.1" y="776.1" width="1.6" height="1.6"/>
</g>
</svg>
<div id="statline" class="abs"></div>
<div class="sf" style="left:11px;top:730px;width:851px;height:18px"></div>
<div class="sf" style="left:11px;top:756px;width:851px"></div>
<div class="sf" style="left:994px;top:730px;width:340px;height:18px"></div>
<div class="sf" style="left:994px;top:756px;width:340px"></div>
<div class="sf" style="left:1343px;top:730px;width:335px;height:18px"></div>
<div class="sf" style="left:1343px;top:756px;width:335px"></div>
<div class="st" style="left:878px;top:731px">09/21/2017</div>
<div class="st" style="left:878px;top:758px">13:44</div>
</body>
</html>
